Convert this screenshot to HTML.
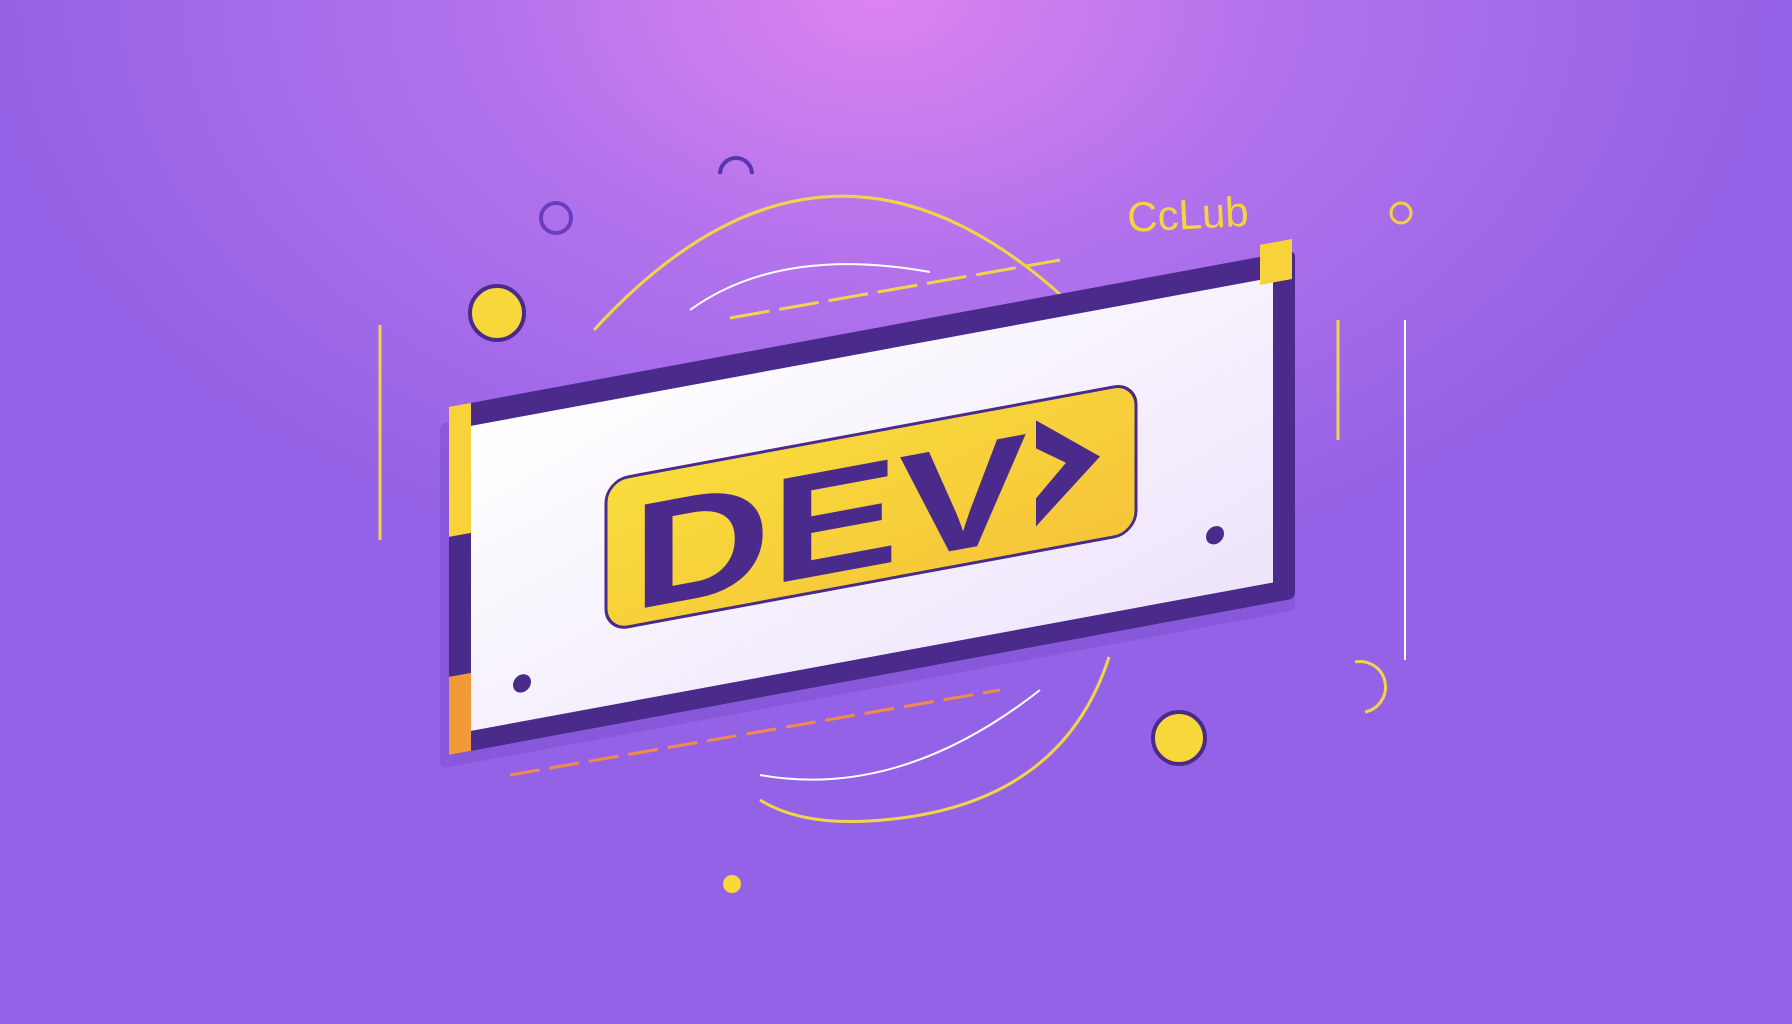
<!DOCTYPE html>
<html><head><meta charset="utf-8"><style>
html,body{margin:0;padding:0;width:1792px;height:1024px;overflow:hidden}
body{background:radial-gradient(ellipse 900px 600px at 880px 0px,#dc84f0 0%,#b272ec 45%,#9462e6 100%),#8d5de4}
svg{position:absolute;left:0;top:0}
</style></head><body>
<svg width="1792" height="1024" viewBox="0 0 1792 1024">
<defs>
<linearGradient id="pill" x1="0" y1="0" x2="1" y2="1"><stop offset="0" stop-color="#f8dc3c"/><stop offset="1" stop-color="#f6c53a"/></linearGradient>
<linearGradient id="wh" x1="0" y1="0" x2="1" y2="1"><stop offset="0" stop-color="#ffffff"/><stop offset="1" stop-color="#eee4fb"/></linearGradient>
</defs>
<g fill="none" stroke="#f2d44a" stroke-width="3">
<path d="M594 330 Q 823 80 1063 297"/>
<path d="M1109 657 Q1060 810 869 821 Q800 825 760 800"/>
<path d="M690 310 Q 780 245 930 272" stroke="#fff" stroke-width="2"/>
<path d="M760 775 Q 900 800 1040 690" stroke="#fff" stroke-width="2"/>
<line x1="380" y1="325" x2="380" y2="540" />
<line x1="1338" y1="320" x2="1338" y2="440" />
<line x1="1405" y1="320" x2="1405" y2="660" stroke="#fff" stroke-width="2"/>
<line x1="730" y1="318" x2="1060" y2="260" stroke-dasharray="40 10"/>
<line x1="510" y1="775" x2="1000" y2="690" stroke="#f28a4a" stroke-dasharray="30 10"/>
<path d="M1355 662 A18 18 0 0 1 1365 712"/>
</g>
<circle cx="556" cy="218" r="15" fill="none" stroke="#6a3cc0" stroke-width="4"/>
<path d="M720 174 A16 16 0 0 1 752 174" fill="none" stroke="#5a34b0" stroke-width="4"/>
<circle cx="1401" cy="213" r="10" fill="none" stroke="#f4d13c" stroke-width="3"/>
<circle cx="497" cy="313" r="27" fill="#f7d73a" stroke="#4a2a8a" stroke-width="4"/>
<circle cx="1179" cy="738" r="26" fill="#f7d73a" stroke="#4a2a8a" stroke-width="4"/>
<circle cx="732" cy="884" r="9" fill="#f7d73a"/>
<text x="1128" y="232" font-family="Liberation Sans,sans-serif" font-size="42" fill="#f4d63a" transform="rotate(-3 1128 232)">CcLub</text>
<g transform="matrix(1,-0.185,0,1,0,0)">
<rect x="440" y="505" width="855" height="345" fill="#7a4ecc" opacity="0.5" rx="6"/>
<rect x="449" y="490" width="846" height="348" fill="#4a2a8a" rx="6"/>
<rect x="471" y="513" width="802" height="305" fill="url(#wh)"/>
<rect x="449" y="490" width="22" height="130" fill="#f7d23a"/>
<rect x="449" y="760" width="22" height="78" fill="#f29a3a"/>
<rect x="1260" y="478" width="32" height="40" fill="#f7d23a"/>
<rect x="606" y="593" width="530" height="150" rx="22" fill="url(#pill)" stroke="#4a2a8a" stroke-width="3"/>
<text x="632" y="727" font-family="Liberation Sans,sans-serif" font-weight="900" font-size="150" fill="#4a2a8a" textLength="395" lengthAdjust="spacingAndGlyphs">DEV</text>
<path d="M1036 612 L1100 660 L1036 718 L1036 690 L1066 660 L1036 640 Z" fill="#4a2a8a"/>
<circle cx="522" cy="780" r="9" fill="#4a2a8a"/>
<circle cx="1215" cy="760" r="9" fill="#4a2a8a"/>
</g>
</svg>
</body></html>
